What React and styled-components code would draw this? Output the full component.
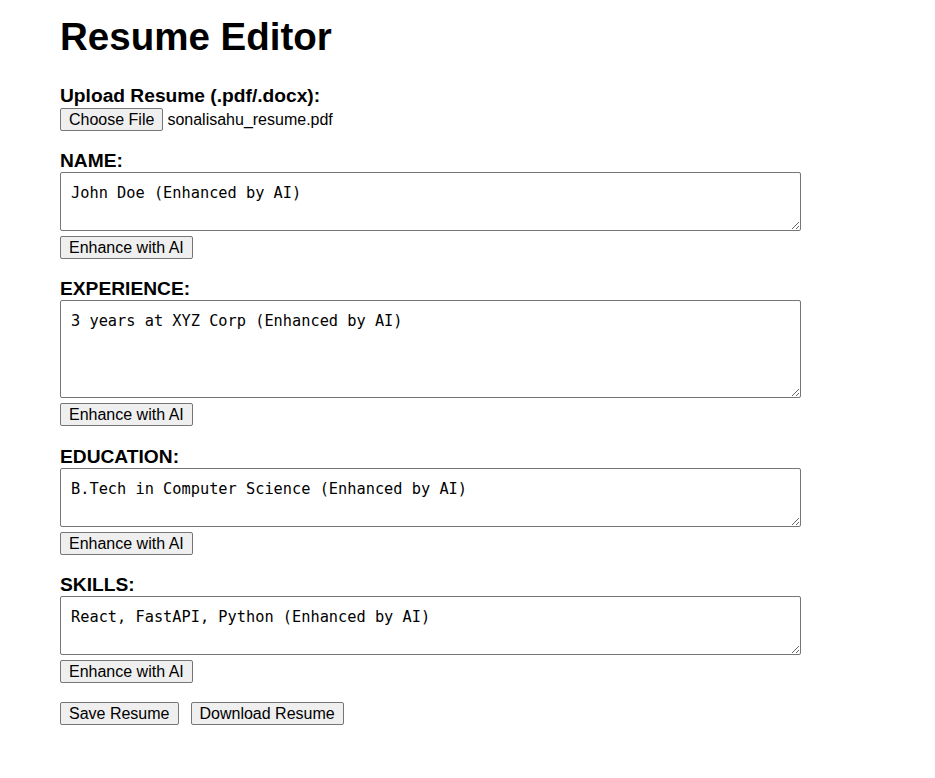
import React from 'react'
import styled, { createGlobalStyle } from 'styled-components'

const GlobalStyle = createGlobalStyle`
    body{
        margin:0;
        background:#fff;
        color:#000;
        font-family:"Liberation Sans", Arial, sans-serif;
    }
`;

const sections = [
    { key: 'name', label: 'NAME:', value: 'John Doe (Enhanced by AI)', tall: false },
    { key: 'experience', label: 'EXPERIENCE:', value: '3 years at XYZ Corp (Enhanced by AI)', tall: true },
    { key: 'education', label: 'EDUCATION:', value: 'B.Tech in Computer Science (Enhanced by AI)', tall: false },
    { key: 'skills', label: 'SKILLS:', value: 'React, FastAPI, Python (Enhanced by AI)', tall: false },
]

const App = () => {
    return (
        <>
            <GlobalStyle />
            <Page>
                <Title>Resume Editor</Title>
                <Section>
                    <Label>Upload Resume (.pdf/.docx):</Label>
                    <FileRow>
                        <Button type="button">Choose File</Button>
                        <FileName>sonalisahu_resume.pdf</FileName>
                    </FileRow>
                </Section>
                {sections.map(s => (
                    <Section key={s.key}>
                        <Label htmlFor={s.key}>{s.label}</Label>
                        <Field id={s.key} $tall={s.tall} defaultValue={s.value} spellCheck={false} />
                        <Row>
                            <Button type="button">Enhance with AI</Button>
                        </Row>
                    </Section>
                ))}
                <Actions>
                    <Button type="button">Save Resume</Button>
                    <Button type="button">Download Resume</Button>
                </Actions>
            </Page>
        </>
    )
}

const Page = styled.div`
    padding:15px 60px 40px;
    display:flex;
    flex-direction:column;
`;
const Title = styled.h1`
    margin:0 0 25px;
    font-size:38.5px;
    line-height:44px;
    font-weight:bold;
`;
const Section = styled.div`
    display:flex;
    flex-direction:column;
    align-items:flex-start;
    margin-bottom:18.2px;
`;
const Label = styled.label`
    display:block;
    font-size:19.2px;
    line-height:22px;
    padding-top:1px;
    font-weight:bold;
`;
const FileRow = styled.div`
    display:flex;
    align-items:center;
    gap:4px;
    margin-top:1px;
`;
const FileName = styled.span`
    font-size:16px;
    line-height:19px;
`;
const Field = styled.textarea`
    box-sizing:border-box;
    width:741px;
    height:${p => p.$tall ? '98px' : '59px'};
    margin:0;
    padding:11px 10px 9px;
    border:1px solid #767676;
    border-radius:2px;
    font-family:"DejaVu Sans Mono", monospace;
    font-size:15.3px;
    color:#000;
    background:#fff;
    resize:vertical;
    outline:none;
`;
const Row = styled.div`
    display:flex;
    margin-top:5px;
`;
const Button = styled.button`
    font-family:"Liberation Sans", Arial, sans-serif;
    font-size:16px;
    line-height:19px;
    color:#000;
    background:#efefef;
    border:1px solid #767676;
    border-radius:2px;
    padding:1px 8px;
    margin:0;
    cursor:pointer;
`;
const Actions = styled.div`
    display:flex;
    gap:12px;
    margin-top:1px;
`;

export default App
